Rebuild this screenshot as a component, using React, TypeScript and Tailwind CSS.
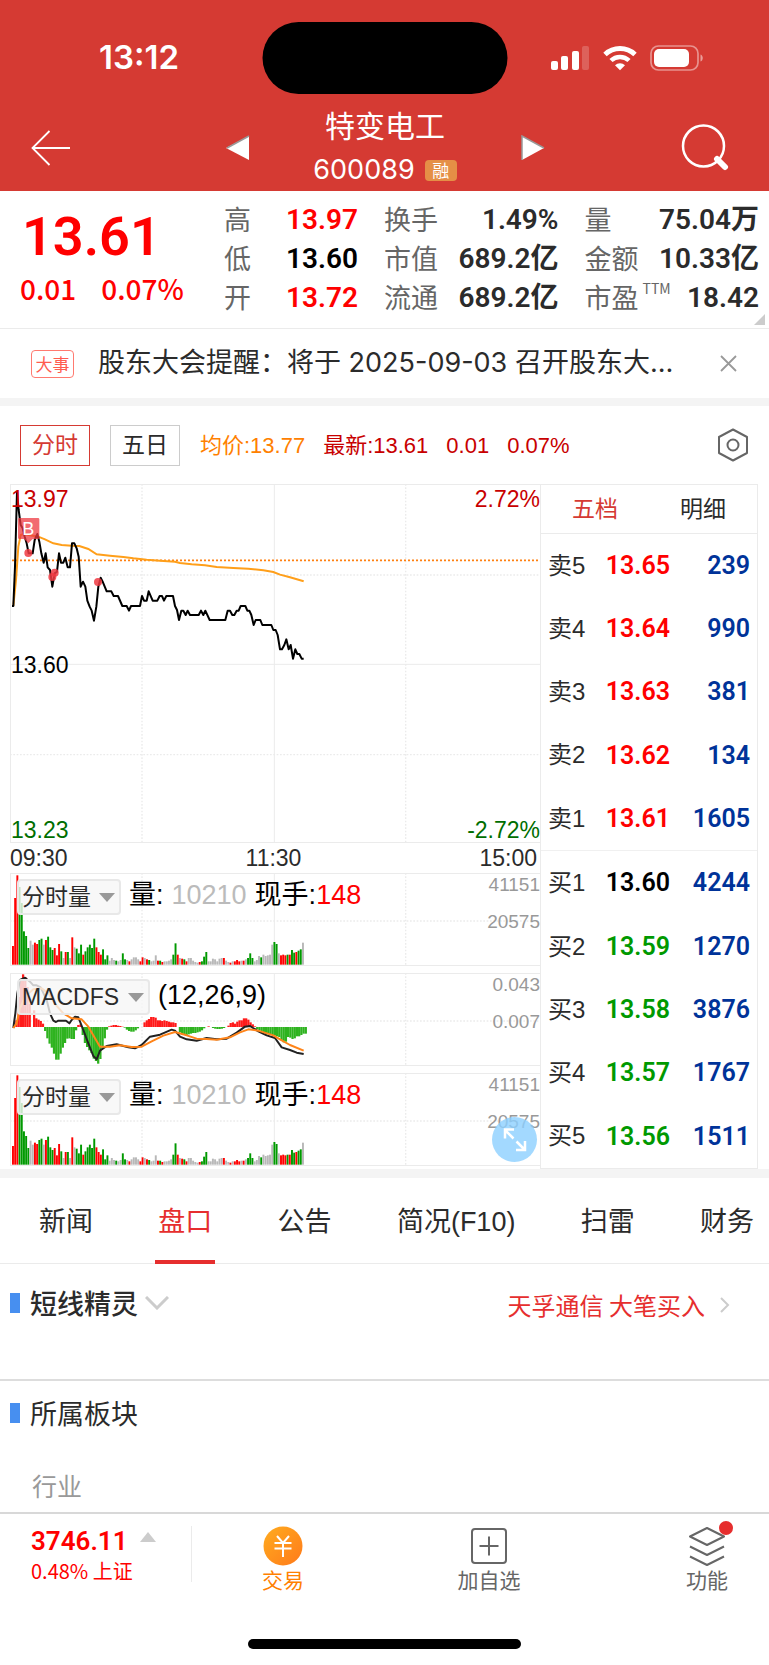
import React from 'react';

const PRICE_LINE =
  '36,618 40,618 45,500 51,275 56,330 62,375 68,385 74,410 80,430 86,460 98,460 104,420 112,402 118,425 124,460 131,488 137,460 143,502 150,510 157,560 164,520 171,515 177,460 183,488 190,488 196,473 203,502 210,502 216,430 223,430 230,445 236,470 242,560 249,545 256,560 262,602 269,620 275,632 282,662 289,620 295,560 302,533 308,545 320,574 334,574 341,588 354,588 367,618 380,618 387,632 393,618 420,618 426,588 432,602 440,602 446,574 458,602 472,602 479,588 486,588 492,602 499,588 519,588 525,618 531,630 537,660 544,632 550,632 557,645 563,632 570,645 596,645 603,632 610,645 616,632 629,660 676,660 683,632 690,632 697,645 703,645 710,632 716,632 722,618 736,618 742,632 748,632 754,645 761,675 767,660 781,660 787,675 814,675 820,690 827,690 833,705 840,748 846,748 853,735 859,718 866,748 872,735 879,776 886,748 892,762 898,762 905,776 911,776';

const AVG_LINE =
  '40,618 48,540 55,440 62,405 70,402 115,410 135,418 160,430 185,435 215,437 238,438 265,447 290,463 330,467 370,471 400,475 440,479 480,482 525,485 540,489 575,493 615,496 650,501 700,504 745,506 790,511 820,516 840,524 870,532 911,544';

const DIF_LINE =
  '40,684 46,640 52,580 60,540 75,533 90,545 100,556 110,556 122,562 140,600 150,640 160,662 168,666 175,662 198,662 208,670 215,660 225,650 235,652 250,690 265,730 280,768 290,778 300,752 320,738 350,733 385,742 405,745 425,735 450,710 480,704 515,689 525,692 540,710 560,718 590,722 620,714 650,718 680,716 710,698 735,680 750,678 775,694 800,706 825,714 845,742 870,750 890,758 911,762';

const DEA_LINE =
  '40,684 50,670 60,625 75,590 100,568 125,565 145,580 165,612 190,640 215,655 245,658 265,680 285,715 300,740 330,740 360,736 395,741 425,740 455,724 490,707 525,696 560,706 590,716 620,717 650,719 690,712 720,697 745,688 775,692 820,706 840,718 870,735 911,752';

// one entry per minute bar: r = up, g = down, e = flat
const VOLUMES =
  'r56 r200 r268 g233 g185 g100 g86 g50 e72 e60 r66 r62 g74 g78 e60 r74 g84 g52 g44 r50 r28 r62 g40 e20 r38 g38 e20 r82 e52 g48 g34 g60 r30 g40 g52 g60 g50 g78 r52 r38 r30 g46 g16 g28 e12 e20 e14 g12 e10 e14 g34 g16 e14 r10 e16 e22 e22 e16 r10 r22 e20 r16 g14 e10 e12 e28 r12 g12 r8 e10 e10 e12 e16 g30 g64 r30 e20 r18 g16 r10 e20 e20 e12 e8 e6 r8 g10 g24 g38 e10 e10 e18 e16 e10 e18 e20 r20 e12 e8 r6 e10 r10 r14 r10 e12 r12 e16 g20 g34 g20 e10 e14 e26 g22 e30 e26 e28 e30 e60 g68 g62 e34 r28 r30 r28 g30 r30 g44 g36 r38 g42 g46 e66'.split(' ');

const MACD_BARS = [
  20, 90, 140, 158, 150, 120, 70, 0, 50, 26, 22, 18, 10, -12, -34, -50, -62, -80, -98, -98, -80, -62, -48, -35, -34,
  -36, -36, -10, 6, 8, -24, -48, -60, -70, -78, -95, -102, -110, -96, -62, -34, -8, 2, 4, 6, 6, 4, 3, 1, -2, -8, -12,
  -14, -14, -10, -4, 0, 0, 14, 20, 24, 30, 30, 28, 20, 20, 18, 20, 18, 16, 14, 14, 12, 0, -16, -22, -24, -26, -22, -20,
  -18, -18, -16, -14, -10, -4, 0, 2, 0, -3, -5, -6, -6, -5, -3, 0, 4, 12, 14, 10, 16, 20, 20, 26, 26, 22, 14, 8, 2,
  -6, -10, -14, -18, -22, -22, -24, -24, -26, -28, -30, -40, -46, -44, -30, -32, -36, -34, -28, -28, -24, -20, -20,
];

const VOLUME_STEP = 870 / (VOLUMES.length - 1);
const MACD_STEP = 868 / (MACD_BARS.length - 1);

const BAR_COLORS: Record<string, string> = { r: '#ff0000', g: '#009900', e: '#b8b8b8' };

const ORDERS = [
  { side: '卖5', price: '13.65', qty: 239, color: 'text-[#ff0000]' },
  { side: '卖4', price: '13.64', qty: 990, color: 'text-[#ff0000]' },
  { side: '卖3', price: '13.63', qty: 381, color: 'text-[#ff0000]' },
  { side: '卖2', price: '13.62', qty: 134, color: 'text-[#ff0000]' },
  { side: '卖1', price: '13.61', qty: 1605, color: 'text-[#ff0000]' },
  { side: '买1', price: '13.60', qty: 4244, color: 'text-black' },
  { side: '买2', price: '13.59', qty: 1270, color: 'text-[#009900]' },
  { side: '买3', price: '13.58', qty: 3876, color: 'text-[#009900]' },
  { side: '买4', price: '13.57', qty: 1767, color: 'text-[#009900]' },
  { side: '买5', price: '13.56', qty: 1511, color: 'text-[#009900]' },
];

const TABS = ['新闻', '盘口', '公告', '简况(F10)', '扫雷', '财务'];

const NUM = 'font-["Roboto","Noto_Sans_CJK_SC",sans-serif] font-semibold';

interface StatProps {
  label: string;
  value: string;
  sup?: string;
  color?: string;
}

const Stat: React.FC<StatProps> = ({ label, value, sup, color = 'text-[#2b2b2b]' }) => (
  <div className="flex h-[39px] items-center justify-between">
    <dt className="relative text-[27px] text-[#666]">
      {label}
      {sup && <sup className="absolute left-full top-1 pl-1 text-[14px] leading-none">{sup}</sup>}
    </dt>
    <dd className={`${NUM} text-[28px] ${color}`}>{value}</dd>
  </div>
);

const Header: React.FC = () => (
  <header className="bg-[#d53a33] text-white">
    <div className="relative flex h-[115px] items-center justify-between pl-[99px] pr-[65px]">
      <span className='font-["Inter",sans-serif] text-[33px] font-semibold'>13:12</span>
      <div className="absolute left-1/2 top-[22px] h-[72px] w-[245px] -translate-x-1/2 rounded-full bg-black" />
      <div className="flex items-center gap-[13px]">
        <svg width="39" height="26" viewBox="0 0 39 26" fill="#fff">
          <rect x="0" y="16" width="7" height="9" rx="2" />
          <rect x="10" y="11" width="7" height="14" rx="2" />
          <rect x="21" y="6" width="7" height="19" rx="2" />
          <rect x="31" y="1" width="7" height="24" rx="2" opacity=".2" />
        </svg>
        <svg width="34" height="26" viewBox="0 0 34 26" fill="none" stroke="#fff">
          <path d="M2 9.5a22 22 0 0 1 30 0" strokeWidth="5" />
          <path d="M8 15.5a13 13 0 0 1 18 0" strokeWidth="4.5" />
          <path d="M12 20.3a7.4 7.4 0 0 1 10 0l-5 5z" fill="#fff" stroke="none" />
        </svg>
        <svg width="54" height="26" viewBox="0 0 54 26" fill="none">
          <rect x="1" y="1" width="47" height="24" rx="7.5" stroke="#fff" strokeOpacity=".45" strokeWidth="1.7" />
          <rect x="4" y="4" width="35" height="18" rx="5" fill="#fff" />
          <path d="M50.500 9.500c3 1 3 6 0 7z" fill="#fff" fillOpacity=".5" />
        </svg>
      </div>
    </div>
    <div className="grid h-[76px] grid-cols-[1fr_auto_1fr] grid-rows-[66px] items-center pl-[31px] pr-[40px]">
      <button aria-label="返回" className="justify-self-start">
        <svg width="40" height="36" viewBox="0 0 40 36" fill="none" stroke="#fff" strokeWidth="1.8">
          <path d="M39 18H2M18.500 1L1.500 18l17 17" />
        </svg>
      </button>
      <div className="flex items-center gap-[63px] pl-[10px]">
        <button aria-label="上一只">
          <svg width="24" height="26" viewBox="0 0 24 26">
            <path d="M23 1v24L0 13z" fill="#fff" />
            <path d="M23 1L1 13" stroke="#999" strokeWidth="1.500" />
          </svg>
        </button>
        <div className="flex w-[145px] flex-col items-center">
          <h1 className="text-[30px] leading-[44px]">特变电工</h1>
          <div className="flex items-center gap-[10px]">
            <span className='font-["Inter",sans-serif] text-[27px] leading-[48px]'>600089</span>
            <span className="flex h-[21px] w-[32px] items-center justify-center rounded-sm bg-[#e58f46] text-[17px]">融</span>
          </div>
        </div>
        <button aria-label="下一只">
          <svg width="24" height="26" viewBox="0 0 24 26">
            <path d="M1 1v24l22-12z" fill="#fff" />
            <path d="M23 13L1 1v24" fill="none" stroke="#999" strokeWidth="1.500" />
          </svg>
        </button>
      </div>
      <button aria-label="搜索" className="justify-self-end">
        <svg width="48" height="48" viewBox="0 0 48 48" fill="none" stroke="#fff">
          <circle cx="22.500" cy="22" r="20.500" strokeWidth="2.500" />
          <path d="M36 35l8 8" strokeWidth="6" strokeLinecap="round" />
        </svg>
      </button>
    </div>
  </header>
);

const Quote: React.FC = () => (
  <section className="relative flex h-[138px] border-b border-[#ebebeb] pr-[10px]">
    <div className="w-[224px] shrink-0 pl-[20px] text-[#ff0000]">
      <p className={`${NUM} pl-[2px] pt-[17px] text-[54px] leading-[58px]`}>13.61</p>
      <p className="flex gap-[25px] pt-[2px] text-[28px] font-medium leading-[40px]">
        <span>0.01</span>
        <span>0.07%</span>
      </p>
    </div>
    <div className="grid flex-1 grid-cols-[134px_1fr_1fr] gap-x-[26px] pt-[9px]">
      <dl>
        <Stat label="高" value="13.97" color="text-[#ff0000]" />
        <Stat label="低" value="13.60" color="text-black" />
        <Stat label="开" value="13.72" color="text-[#ff0000]" />
      </dl>
      <dl>
        <Stat label="换手" value="1.49%" />
        <Stat label="市值" value="689.2亿" />
        <Stat label="流通" value="689.2亿" />
      </dl>
      <dl>
        <Stat label="量" value="75.04万" />
        <Stat label="金额" value="10.33亿" />
        <Stat label="市盈" sup="TTM" value="18.42" />
      </dl>
    </div>
    <svg className="absolute bottom-[3px] right-[4px]" width="11" height="11" viewBox="0 0 11 11">
      <path d="M11 0v11H0z" fill="#ccc" />
    </svg>
  </section>
);

const Notice: React.FC = () => (
  <section className="flex h-[69px] items-center pl-[31px] pr-[32px]">
    <span className="flex h-[28px] w-[43px] shrink-0 items-center justify-center rounded border border-[#ff7a70] text-[17px] text-[#ff5c50]">
      大事
    </span>
    <p className='ml-[24px] flex-1 truncate font-["Inter","Noto_Sans_CJK_SC",sans-serif] text-[27px] text-[#2b2b2b]'>
      股东大会提醒：将于 2025-09-03 召开股东大…
    </p>
    <button aria-label="关闭" className="shrink-0">
      <svg width="17" height="17" viewBox="0 0 17 17" stroke="#999" strokeWidth="1.800">
        <path d="M1 1l15 15M16 1L1 16" />
      </svg>
    </button>
  </section>
);

const Toolbar: React.FC = () => (
  <div className='flex h-[78px] items-center pl-[20px] pr-[19px] font-["Liberation_Sans","Noto_Sans_CJK_SC",sans-serif] text-[22px]'>
    <button className="h-[41px] w-[70px] border border-[#d53a33] text-[23px] text-[#d53a33]">分时</button>
    <button className="ml-[20px] h-[41px] w-[70px] border border-[#ccc] text-[23px] text-[#2b2b2b]">五日</button>
    <span className="ml-[20px] text-[#ff8000]">均价:13.77</span>
    <span className="ml-[18px] text-[#c80000]">最新:13.61</span>
    <span className="ml-[18px] text-[#c80000]">0.01</span>
    <span className="ml-[18px] text-[#c80000]">0.07%</span>
    <button aria-label="设置" className="ml-auto">
      <svg width="34" height="34" viewBox="0 0 34 34" fill="none" stroke="#666" strokeWidth="2">
        <path d="M17 1.500L31 9v16l-14 7.500L3 25V9z" strokeLinejoin="round" />
        <circle cx="17" cy="17" r="5.500" />
      </svg>
    </button>
  </div>
);

// Vertical and horizontal grid lines shared by all the panes
const Grid: React.FC<{ top: number; bottom: number; dotted: number[]; solid?: number[] }> = ({
  top,
  bottom,
  dotted,
  solid = [],
}) => (
  <g stroke="#ebebeb" strokeWidth="3" fill="none">
    <rect x="31.500" y={top + 1.5} width="1590" height={bottom - top - 3} />
    <path d={`M823 ${top}V${bottom}`} />
    {solid.map(y => (
      <path key={y} d={`M30 ${y}H1620`} />
    ))}
    <g strokeWidth="4" strokeDasharray="5 5">
      <path d={`M426 ${top}V${bottom}M1217 ${top}V${bottom}`} />
      {dotted.map(y => (
        <path key={y} d={`M30 ${y}H1620`} />
      ))}
    </g>
  </g>
);

const PriceChart: React.FC = () => (
  <div className="relative h-[359px] text-[23px] leading-[24px]">
    <svg className="block h-full w-full" viewBox="30 252 1590 1077" preserveAspectRatio="none" fill="none">
      <Grid top={252} bottom={1329} dotted={[525, 1064]} solid={[793]} />
      <path d="M36 481H1620" stroke="#ff8010" strokeWidth="5" strokeDasharray="6 6" />
      <polyline points={AVG_LINE} stroke="#ff9f1a" strokeWidth="6" />
      <polyline points={PRICE_LINE} stroke="#000" strokeWidth="6" strokeLinejoin="round" />
      <g fill="#ee3a42" fillOpacity=".85">
        <circle cx="85" cy="459" r="12" />
        <circle cx="157" cy="531" r="12" />
        <circle cx="164" cy="518" r="12" />
        <circle cx="294" cy="546" r="12" />
        <path d="M58 354h56q4 0 4 4v55q0 4-4 4H98l-13 13-13-13H58q-4 0-4-4v-55q0-4 4-4z" fillOpacity=".75" />
      </g>
      <text x="85" y="405" fill="#fff" fontSize="54" textAnchor="middle">B</text>
    </svg>
    <span className="absolute left-[1px] top-[3px] text-[#c80000]">13.97</span>
    <span className="absolute right-0 top-[3px] text-[#c80000]">2.72%</span>
    <span className="absolute left-[1px] top-[169px] text-black">13.60</span>
    <span className="absolute bottom-[1px] left-[1px] text-[#006e00]">13.23</span>
    <span className="absolute bottom-[1px] right-0 text-[#006e00]">-2.72%</span>
  </div>
);

interface PaneProps {
  name: string;
  scale: [string, string];
  info: React.ReactNode;
  children: React.ReactNode;
}

const Pane: React.FC<PaneProps> = ({ name, scale, info, children }) => (
  <div className="relative h-[93px]">
    <svg className="block h-full w-full" viewBox="30 219 1590 279" preserveAspectRatio="none" fill="none">
      <Grid top={219} bottom={498} dotted={[363]} />
      {children}
    </svg>
    <div className="absolute left-[7px] top-[6px] flex items-center gap-[8px]">
      <label className="relative block">
        <select
          aria-label="指标"
          className="block h-[36px] appearance-none rounded-sm border-2 border-[#e8e8e8] bg-[#f6f6f6]/80 pl-[3px] pr-[28px] text-[23px] leading-[30px] text-[#2b2b2b]"
        >
          <option>{name}</option>
        </select>
        <svg className="absolute right-[6px] top-[14px]" width="16" height="9" viewBox="0 0 16 9">
          <path d="M0 0h16L8 9z" fill="#999" />
        </svg>
      </label>
      <p className="flex gap-[8px] whitespace-nowrap pb-[4px] text-[27px] leading-[30px] text-black">{info}</p>
    </div>
    <div className="absolute right-0 top-0 flex flex-col items-end gap-[13px] text-[19px] leading-[24px] text-[#999]">
      <span>{scale[0]}</span>
      <span>{scale[1]}</span>
    </div>
  </div>
);

const VolumePane: React.FC = () => (
  <Pane
    name="分时量"
    scale={['41151', '20575']}
    info={
      <>
        <span>量:</span>
        <span className="text-[#bbb]">10210</span>
        <span>
          现手:<span className="text-[#ff0000]">148</span>
        </span>
      </>
    }
  >
    {VOLUMES.map((bar, i) => {
      const height = Number(bar.slice(1));
      return <rect key={i} x={36 + i * VOLUME_STEP} y={494 - height} width="5.800" height={height} fill={BAR_COLORS[bar[0]]} />;
    })}
  </Pane>
);

const MacdPane: React.FC = () => (
  <Pane name="MACDFS" scale={['0.043', '0.007']} info={<span>(12,26,9)</span>}>
    <g transform="translate(0 -300)">
      {MACD_BARS.map((v, i) => (
        <rect
          key={i}
          x={46 + i * MACD_STEP}
          y={v > 0 ? 681 - v : 681}
          width="6.800"
          height={Math.abs(v)}
          fill={v > 0 ? '#ff1a1a' : '#2eb31f'}
        />
      ))}
      <polyline points={DIF_LINE} stroke="#222" strokeWidth="6" strokeLinejoin="round" />
      <polyline points={DEA_LINE} stroke="#ff8419" strokeWidth="6" strokeLinejoin="round" />
    </g>
  </Pane>
);

const OrderBook: React.FC = () => (
  <div className="flex w-[218px] shrink-0 flex-col border border-[#ebebeb]">
    <div className="flex h-[49px] shrink-0 items-center justify-around border-b border-[#ebebeb] text-[23px]">
      <button className="text-[#d53a33]">五档</button>
      <button className="text-[#2b2b2b]">明细</button>
    </div>
    <table className="w-full flex-1 table-fixed">
      <tbody>
        {ORDERS.map(o => (
          <tr key={o.side} className={o.side === '买1' ? 'border-t border-[#f0f0f0]' : ''}>
            <td className='w-[50px] whitespace-nowrap pl-[7px] font-["Liberation_Sans","Noto_Sans_CJK_SC",sans-serif] text-[24px] text-[#2b2b2b]'>
              {o.side}
            </td>
            <td className={`${NUM} w-[79px] text-right text-[25px] ${o.color}`}>{o.price}</td>
            <td className={`${NUM} pr-[7px] text-right text-[25px] text-[#003399]`}>{o.qty}</td>
          </tr>
        ))}
      </tbody>
    </table>
  </div>
);

const Charts: React.FC = () => (
  <section className='flex h-[685px] pl-[10px] pr-[11px] font-["Liberation_Sans","Noto_Sans_CJK_SC",sans-serif]'>
    <div className="relative min-w-0 flex-1">
      <PriceChart />
      <div className="flex h-[30px] items-center justify-between pr-[3px] text-[23px] text-[#2b2b2b]">
        <span>09:30</span>
        <span>11:30</span>
        <span>15:00</span>
      </div>
      <div className="flex flex-col gap-[7px]">
        <VolumePane />
        <MacdPane />
        <VolumePane />
      </div>
      <button
        aria-label="全屏"
        className="absolute bottom-[7px] right-[3px] flex h-[45px] w-[45px] items-center justify-center rounded-full bg-[#8ccfff]/80"
      >
        <svg width="24" height="24" viewBox="0 0 24 24" fill="none" stroke="#fff" strokeWidth="2.500">
          <path d="M11 1.500H2v9M2 2l8.500 8.500M13.500 13.500L22 22M22 13v9h-9" />
        </svg>
      </button>
    </div>
    <OrderBook />
  </section>
);

const BottomNav: React.FC = () => (
  <footer className="border-t-2 border-[#d8d8d8]">
    <nav className="flex h-[96px] items-start pl-[31px] pr-[41px] pt-[12px] text-[21px] leading-[26px] text-[#666]">
      <a href="#index" className="flex h-[56px] w-[161px] shrink-0 items-center border-r border-[#ebebeb] text-[#ff0000]">
        <span>
          <span className="flex items-start gap-[12px]">
            <span className={`${NUM} text-[26px] leading-[34px]`}>3746.11</span>
            <svg className="mt-[8px]" width="16" height="10" viewBox="0 0 16 10">
              <path d="M8 0l8 10H0z" fill="#ccc" />
            </svg>
          </span>
          <span className="block text-[20px] leading-[26px]">0.48% 上证</span>
        </span>
      </a>
      <div className="flex flex-1 justify-between pl-[70px]">
        <a href="#trade" className="flex flex-col items-center text-[#ff8000]">
          <svg width="40" height="40" viewBox="0 0 40 40" fill="none">
            <defs>
              <linearGradient id="trade" x1="0" y1="0" x2="1" y2="1">
                <stop offset="0" stopColor="#ffac1f" />
                <stop offset="1" stopColor="#ff7a1a" />
              </linearGradient>
            </defs>
            <circle cx="20" cy="20" r="19.500" fill="url(#trade)" />
            <path d="M14 10l6 7 6-7M11.500 17h17M11.500 22.500h17M20 17v14" stroke="#fff" strokeWidth="2" />
          </svg>
          交易
        </a>
        <a href="#watch" className="flex flex-col items-center">
          <svg width="40" height="40" viewBox="0 0 40 40" fill="none" stroke="#666" strokeWidth="2">
            <rect x="3" y="3" width="34" height="34" rx="3" />
            <path d="M20 10.500v19M10.500 20h19" />
          </svg>
          加自选
        </a>
        <a href="#more" className="relative flex flex-col items-center pl-[12px]">
          <svg width="40" height="40" viewBox="0 0 40 40" fill="none" stroke="#666" strokeWidth="2">
            <path d="M20 2l17 8.500L20 19 3 10.500zM3 20.500L20 29l17-8.500M3 30.500L20 39l17-8.500" strokeLinejoin="round" />
          </svg>
          <span className="absolute -right-[5px] -top-[5px] h-[14px] w-[14px] rounded-full bg-[#e62e2e]" />
          功能
        </a>
      </div>
    </nav>
    <div className="flex h-[55px] items-start justify-center pt-[29px]">
      <div className="h-[10px] w-[273px] rounded-full bg-black" />
    </div>
  </footer>
);

const App: React.FC = () => (
  <div className='min-h-screen bg-white font-["Noto_Sans_CJK_SC",sans-serif]'>
    <Header />
    <Quote />
    <Notice />
    <div className="h-[8px] bg-[#f4f4f4]" />
    <Toolbar />
    <Charts />
    <div className="h-[9px] bg-[#f4f4f4]" />
    <div className="flex h-[86px] items-stretch justify-between border-b border-[#ebebeb] pl-[39px] pr-[15px] font-['Liberation_Sans','Noto_Sans_CJK_SC',sans-serif] text-[27px]">
      {TABS.map(tab => (
        <button key={tab} className={tab === '盘口' ? 'relative pt-[4px] text-[#e62e2e]' : 'pt-[4px] text-[#2b2b2b]'}>
          {tab}
          {tab === '盘口' && <span className="absolute -inset-x-[3px] -bottom-px h-[4px] bg-[#e62e2e]" />}
        </button>
      ))}
    </div>
    <section className="flex h-[117px] items-start border-b-2 border-[#ddd] pl-[10px] pr-[39px] pt-[20px]">
      <h2 className="flex h-[38px] items-center text-[27px] font-medium text-[#2b2b2b]">
        <span className="mr-[10px] h-[20px] w-[10px] bg-[#478ff0]" />
        短线精灵
        <svg className="ml-[7px]" width="24" height="14" viewBox="0 0 24 14" fill="none" stroke="#ccc" strokeWidth="3">
          <path d="M1 1l11 11L23 1" />
        </svg>
      </h2>
      <a href="#alert" className="ml-auto flex h-[42px] items-center gap-[15px] text-[24px] text-[#e62e2e]">
        天孚通信 大笔买入
        <svg width="10" height="16" viewBox="0 0 10 16" fill="none" stroke="#ccc" strokeWidth="2">
          <path d="M1 1l7 7-7 7" />
        </svg>
      </a>
    </section>
    <section className="h-[131px] pl-[10px] pt-[13px]">
      <h2 className="flex h-[38px] items-center text-[27px] text-[#2b2b2b]">
        <span className="mr-[10px] h-[20px] w-[10px] bg-[#478ff0]" />
        所属板块
      </h2>
      <p className="pl-[22px] pt-[34px] text-[25px] leading-[38px] text-[#999]">行业</p>
    </section>
    <BottomNav />
  </div>
);

export default App;
